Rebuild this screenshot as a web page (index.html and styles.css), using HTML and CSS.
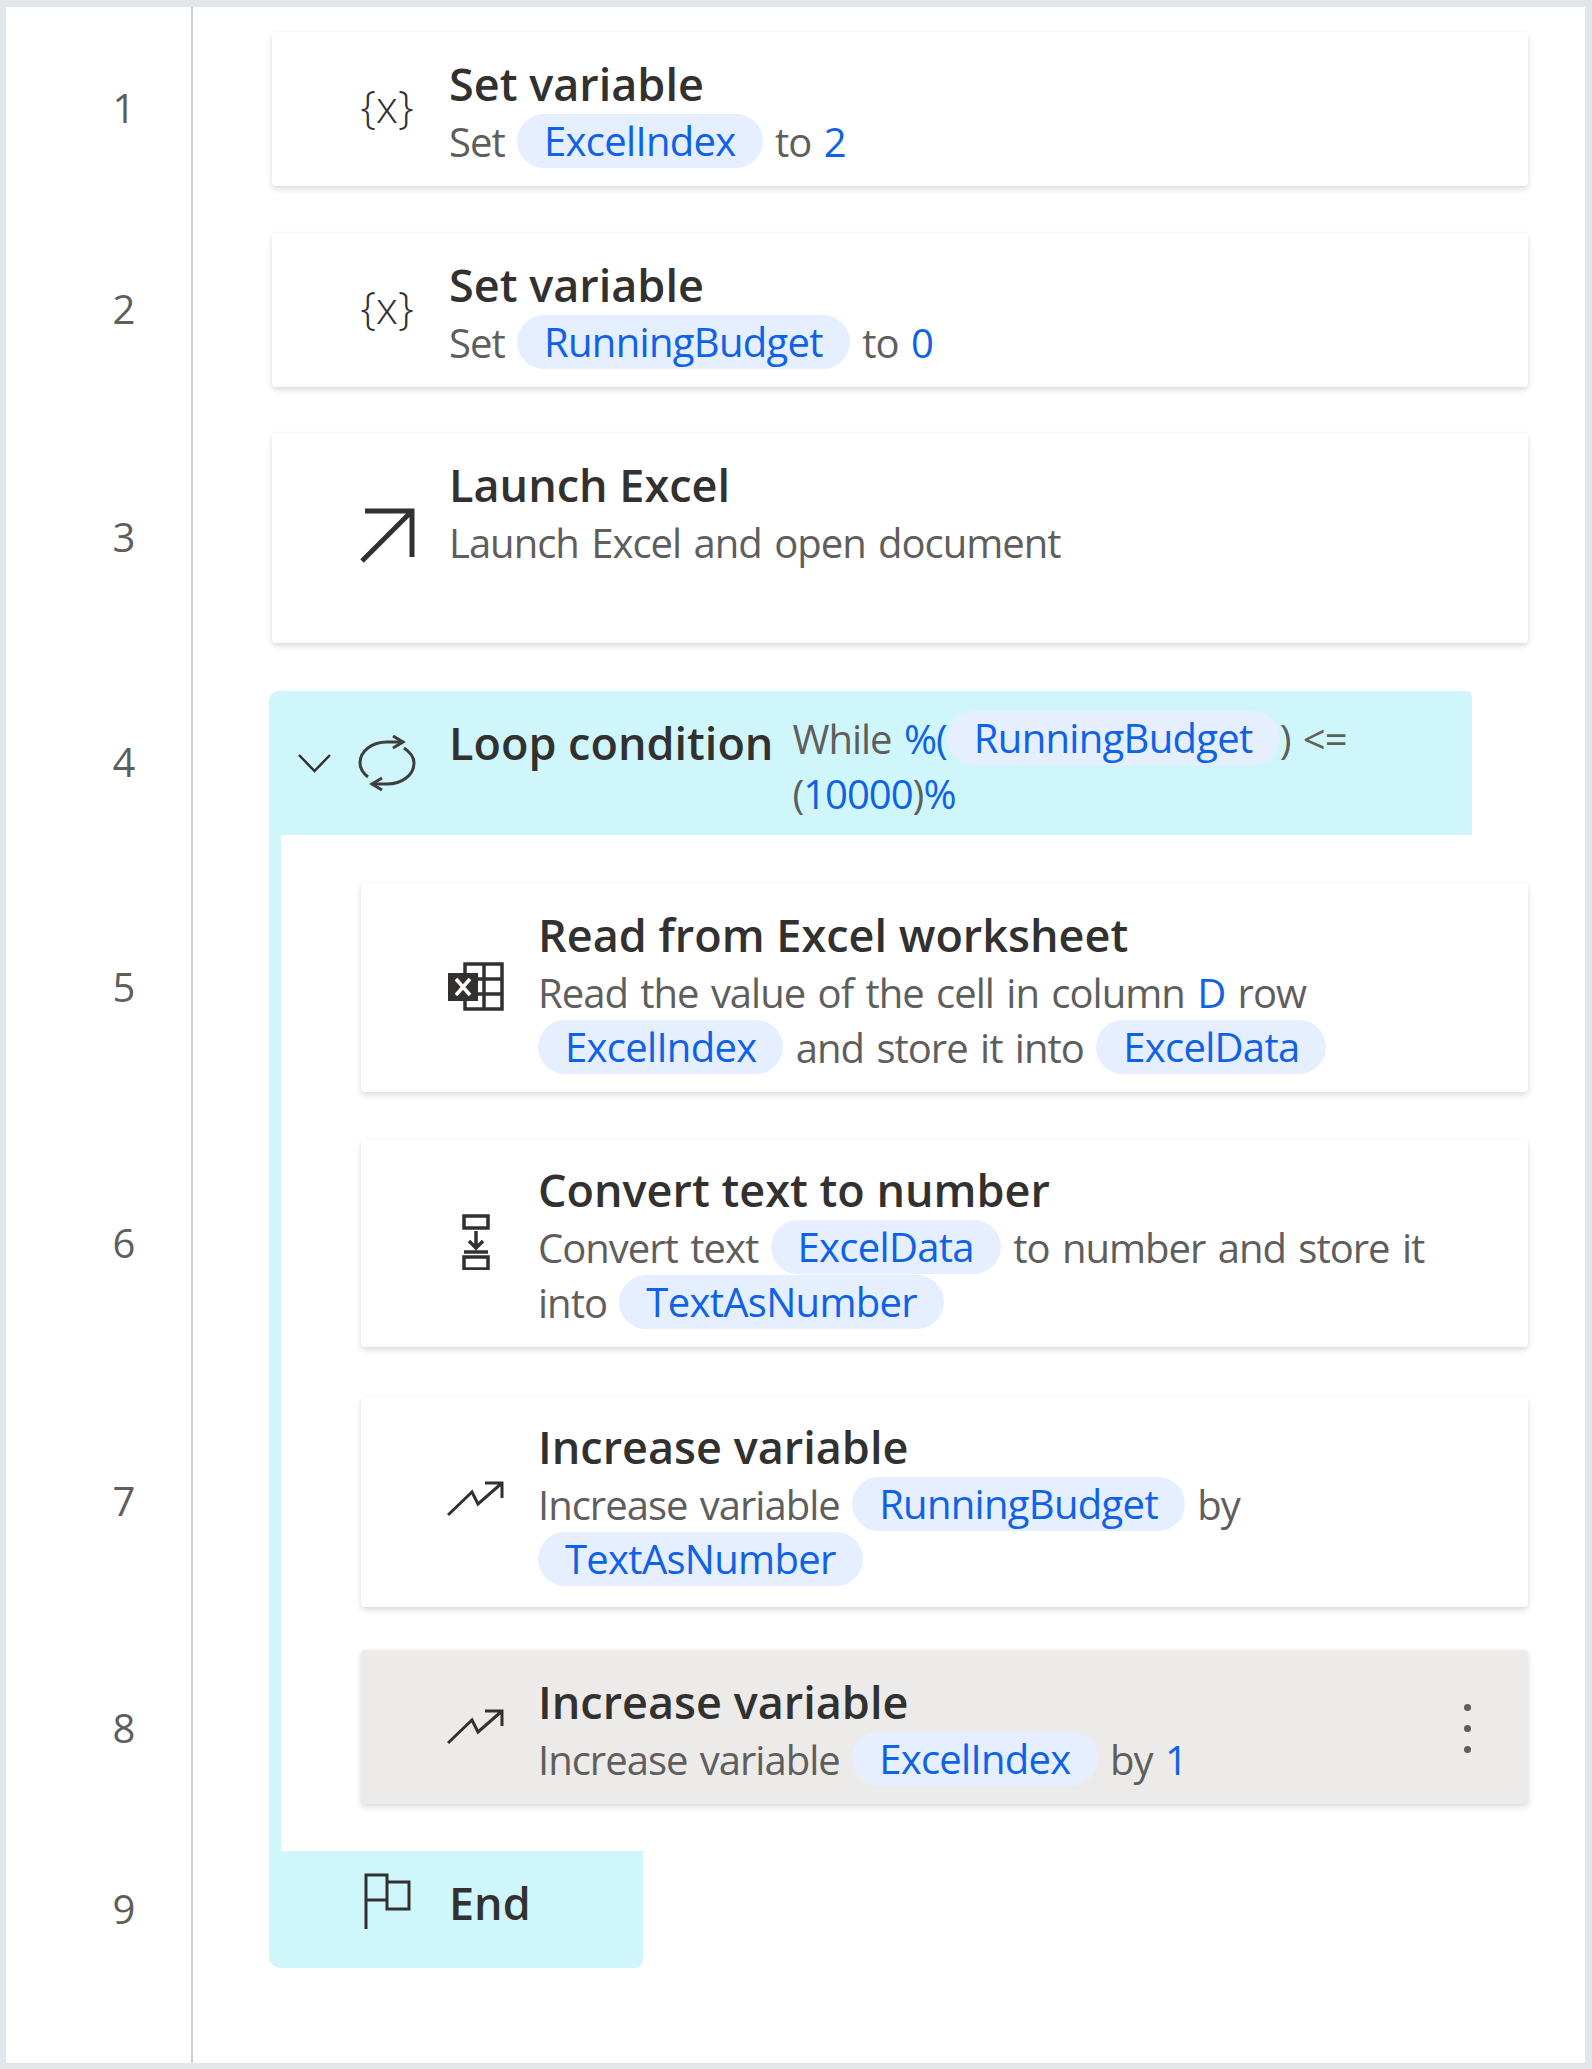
FILE: index.html
```html
<!DOCTYPE html>
<html lang="en">
<head>
  <meta charset="UTF-8" />
  <title>Flow</title>
  <link rel="stylesheet" href="styles.css">
</head>
<body>
  <main class="panel">
    <div class="row row-first">
      <div class="num">1</div>
      <div class="slot">
        <div class="card">
          <div class="icon icon-text">{x}</div>
          <div class="text">
            <div class="title">Set variable</div>
            <div class="desc">Set <span class="chip">ExcelIndex</span> to <span class="val">2</span></div>
          </div>
        </div>
      </div>
    </div>

    <div class="row row-47">
      <div class="num">2</div>
      <div class="slot">
        <div class="card">
          <div class="icon icon-text">{x}</div>
          <div class="text">
            <div class="title">Set variable</div>
            <div class="desc">Set <span class="chip">RunningBudget</span> to <span class="val">0</span></div>
          </div>
        </div>
      </div>
    </div>

    <div class="row row-46">
      <div class="num">3</div>
      <div class="slot">
        <div class="card card-tall">
          <div class="icon icon-launch">
            <svg width="56" height="56" viewBox="0 0 56 56"><path d="M6 4H53V50M53 4L3 54" fill="none" stroke="#323130" stroke-width="5"/></svg>
          </div>
          <div class="text">
            <div class="title">Launch Excel</div>
            <div class="desc">Launch Excel and open document</div>
          </div>
        </div>
      </div>
    </div>

    <div class="row">
      <div class="num">4</div>
      <div class="slot slot-loop">
        <div class="loop-head">
          <svg class="chevron" width="35" height="20" viewBox="0 0 35 20"><path d="M2 2L17.500 18L33 2" fill="none" stroke="#323130" stroke-width="2.500"/></svg>
          <div class="icon">
            <svg width="58" height="56" viewBox="0 0 58 56" fill="none" stroke="#3f3e3d" stroke-width="3"><path d="M45 7H29C14 7 2 16 2 28C2 34 5 38 10 42"/><path d="M35 1L45 7L35 13"/><path d="M14 49H29C44 49 56 40 56 28C56 22 52 17 46 13"/><path d="M24 43L14 49L24 55"/></svg>
          </div>
          <div class="title title-loop">Loop condition</div>
          <div class="desc desc-loop">While <span class="val">%(</span><span class="chip">RunningBudget</span>) &lt;= (<span class="val">10000</span>)<span class="val">%</span></div>
        </div>
      </div>
    </div>

    <div class="row">
      <div class="num">5</div>
      <div class="slot slot-nested">
        <div class="card">
          <div class="icon">
            <svg width="56" height="50" viewBox="0 0 56 50"><path d="M17 2H54V47H17ZM17 17H54M17 32H54M36 2V47" fill="none" stroke="#323130" stroke-width="3.500"/><rect x="0" y="11" width="30" height="28" fill="#323130"/><path d="M8 17L22 33M22 17L8 33" stroke="#fff" stroke-width="3.500"/></svg>
          </div>
          <div class="text">
            <div class="title">Read from Excel worksheet</div>
            <div class="desc">Read the value of the cell in column <span class="val">D</span> row <span class="chip">ExcelIndex</span> and store it into <span class="chip">ExcelData</span></div>
          </div>
        </div>
      </div>
    </div>

    <div class="row">
      <div class="num">6</div>
      <div class="slot slot-nested">
        <div class="card card-convert">
          <div class="icon">
            <svg width="28" height="56" viewBox="0 0 28 56" fill="none" stroke="#323130" stroke-width="3.500"><path d="M2 2H26V14H2ZM2 43H26V55H2ZM14 17V33M7 27L14 34L21 27M2 38H26"/></svg>
          </div>
          <div class="text">
            <div class="title">Convert text to number</div>
            <div class="desc">Convert text <span class="chip">ExcelData</span> to number and store it into <span class="chip">TextAsNumber</span></div>
          </div>
        </div>
      </div>
    </div>

    <div class="row row-50">
      <div class="num">7</div>
      <div class="slot slot-nested">
        <div class="card card-increase">
          <div class="icon">
            <svg width="58" height="36" viewBox="0 0 58 36"><path d="M1 34L25 11L31 23L55 2M38 2H55V17" fill="none" stroke="#323130" stroke-width="3"/></svg>
          </div>
          <div class="text">
            <div class="title">Increase variable</div>
            <div class="desc">Increase variable <span class="chip">RunningBudget</span> by <span class="chip">TextAsNumber</span></div>
          </div>
        </div>
      </div>
    </div>

    <div class="row row-43">
      <div class="num">8</div>
      <div class="slot slot-nested slot-last">
        <div class="card card-selected">
          <div class="icon">
            <svg width="58" height="36" viewBox="0 0 58 36"><path d="M1 34L25 11L31 23L55 2M38 2H55V17" fill="none" stroke="#323130" stroke-width="3"/></svg>
          </div>
          <div class="text">
            <div class="title">Increase variable</div>
            <div class="desc">Increase variable <span class="chip">ExcelIndex</span> by <span class="val">1</span></div>
          </div>
          <div class="kebab"><span></span><span></span><span></span></div>
        </div>
      </div>
    </div>

    <div class="row row-end">
      <div class="num">9</div>
      <div class="slot slot-end">
        <div class="loop-end">
          <div class="icon">
            <svg width="48" height="56" viewBox="0 0 48 56" fill="none" stroke="#323130" stroke-width="3"><path d="M3 56V2H24V27H3M24 9H46V36H24V27"/></svg>
          </div>
          <div class="title">End</div>
        </div>
      </div>
    </div>
  </main>
</body>
</html>
```

FILE: styles.css
```css
:root {
  --teal: #cff6fa;
  --title: #323130;
  --muted: #605e5c;
  --blue: #0f62e8;
  --font: "Open Sans", "Noto Sans", sans-serif;
}

html, body {
  height: 100%;
}

body {
  margin: 0;
  display: flex;
  background-color: #e3e7ea;
  font-family: var(--font);
  color: var(--title);
}

.panel {
  flex: 1;
  margin: 7px 7px 6px 6px;
  background: #fff linear-gradient(#d2d0ce, #d2d0ce) 185px 0 / 2px 100% no-repeat;
  overflow: hidden;
}

.row {
  --top: 48px;
  display: flex;
}

.row-first { --top: 25px; }
.row-46 { --top: 46px; }
.row-47 { --top: 47px; }
.row-50 { --top: 50px; }
.row-43 { --top: 43px; }
.row-end { --top: 0px; }

.num {
  width: 186px;
  flex-shrink: 0;
  box-sizing: border-box;
  padding-top: var(--top);
  padding-left: 50px;
  padding-bottom: 3px;
  display: flex;
  align-items: center;
  justify-content: center;
  font-size: 40px;
  color: var(--muted);
}

.row-43 .num {
  padding-bottom: 47px;
}

.slot {
  flex: 1;
  min-width: 0;
  padding: var(--top) 57px 0 80px;
}

.slot-loop {
  padding-left: 77px;
  padding-right: 113px;
}

.slot-nested {
  margin-left: 77px;
  padding-left: 80px;
  border-left: 12px solid var(--teal);
}

.slot-last {
  padding-bottom: 47px;
}

.slot-end {
  padding-left: 77px;
}

.card {
  display: flex;
  box-sizing: border-box;
  padding: 22px 68px 17px 75px;
  border-radius: 4px;
  background-color: #fff;
  box-shadow: 0 3px 6px rgba(0, 0, 0, 0.14), 0 0 3px rgba(0, 0, 0, 0.03);
}

.card-tall {
  min-height: 210px;
}

.card-convert {
  padding-top: 20px;
}

.card-increase {
  padding-top: 20px;
  padding-bottom: 20px;
}

.card-selected {
  position: relative;
  background-color: #ecebe9;
}

.icon {
  width: 80px;
  flex-shrink: 0;
  margin-right: 22px;
  align-self: center;
  display: flex;
  align-items: center;
  justify-content: center;
}

.card .icon {
  margin-bottom: 6px;
}

.card .icon-launch {
  margin-bottom: 12px;
}

.icon svg {
  display: block;
}

.card .icon-text {
  font-size: 44px;
  font-weight: 300;
  margin-bottom: 12px;
}

.title {
  font-size: 45px;
  font-weight: 600;
  line-height: 60px;
  white-space: nowrap;
}

.desc {
  font-size: 40px;
  letter-spacing: -1px;
  line-height: 55px;
  color: var(--muted);
  word-spacing: 3px;
}

.chip {
  display: inline-block;
  vertical-align: top;
  height: 54px;
  padding: 0 27px;
  border-radius: 27px;
  background-color: #e5efff;
  color: var(--blue);
  letter-spacing: -0.7px;
  line-height: 54px;
}

.val {
  color: var(--blue);
}

.kebab {
  position: absolute;
  top: 54px;
  right: 57px;
  display: flex;
  flex-direction: column;
  gap: 14px;
}

.kebab span {
  width: 7px;
  height: 7px;
  border-radius: 50%;
  background-color: var(--muted);
}

.loop-head {
  display: flex;
  align-items: center;
  box-sizing: border-box;
  height: 144px;
  padding-left: 28px;
  border-radius: 10px 6px 0 0;
  background-color: var(--teal);
}

.chevron {
  flex-shrink: 0;
  margin-right: 15px;
}

.title-loop {
  align-self: flex-start;
  padding-top: 22px;
}

.desc-loop {
  align-self: flex-start;
  padding: 20px 0 0 19px;
}

.loop-end {
  display: flex;
  align-items: flex-start;
  box-sizing: border-box;
  width: 374px;
  height: 117px;
  padding: 22px 0 0 78px;
  border-radius: 0 0 8px 12px;
  background-color: var(--teal);
}

.loop-end .icon {
  align-self: flex-start;
}
```
